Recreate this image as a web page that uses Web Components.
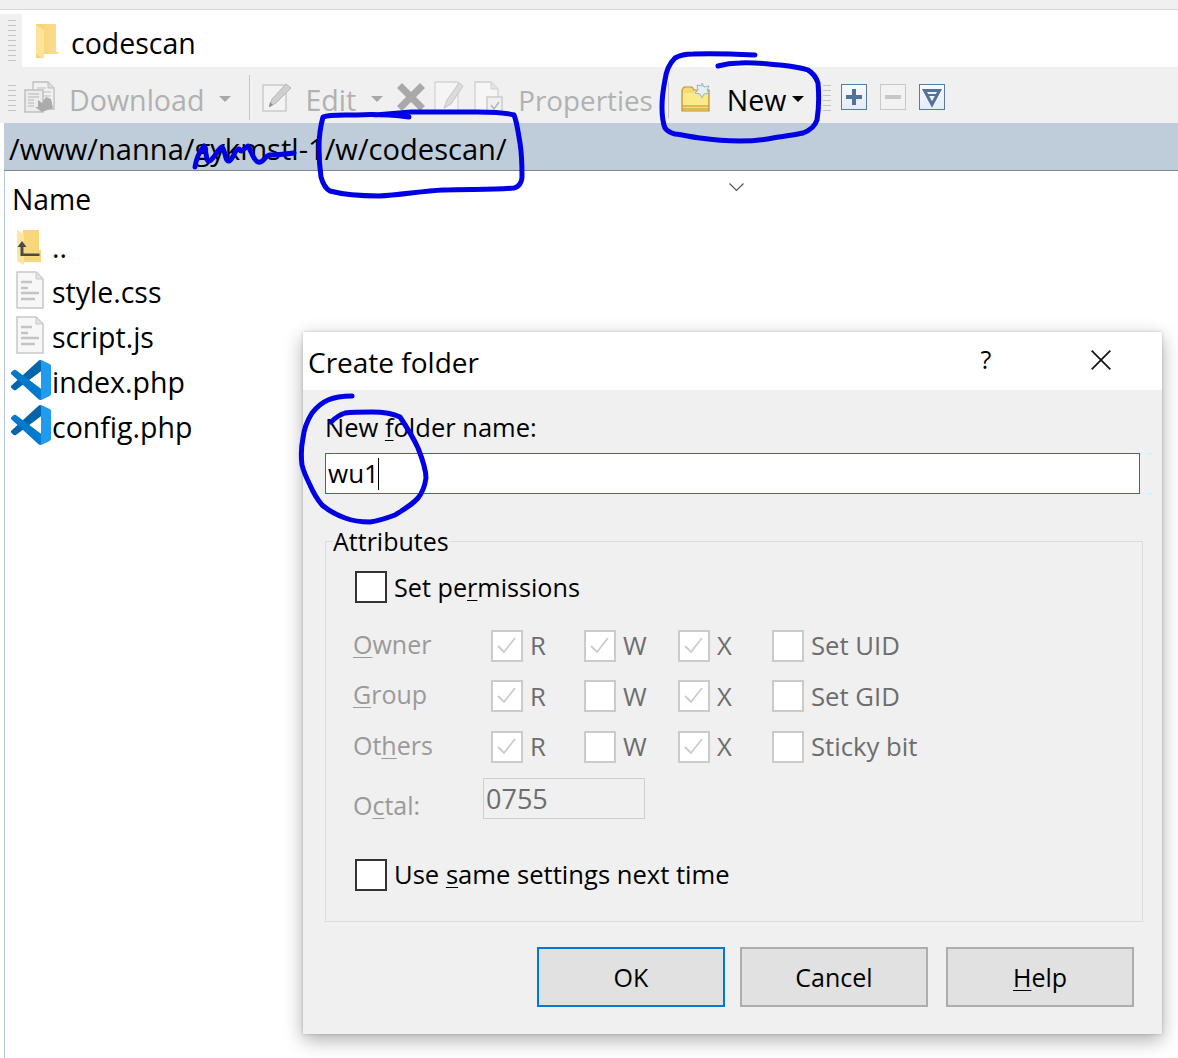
<!DOCTYPE html>
<html lang="en"><head><meta charset="utf-8"><title>Create folder</title>
<style>
html,body{margin:0;padding:0;background:#fff;overflow:hidden}
body{font-family:"Open Sans","Liberation Sans",sans-serif;color:#000}
</style></head><body>
<fz-app></fz-app>
<script>
const define=(name,html)=>{customElements.define(name,class extends HTMLElement{
  constructor(){super();this.attachShadow({mode:'open'});if(typeof html!=='function')this.shadowRoot.innerHTML=html}
  connectedCallback(){if(typeof html==='function')this.shadowRoot.innerHTML=html(this)}
})};

const GRIP=(h)=>`<svg width="9" height="${h}" viewBox="0 0 9 ${h}" style="display:block;flex:none">${Array.from({length:Math.floor(h/5)+1},(_,i)=>`<rect x="0" y="${i*5}" width="8" height="1" fill="#c4c4c4"/>`).join('')}</svg>`;

const VS=`<svg width="40" height="40" viewBox="0 0 100 100" style="margin-top:-3px"><path fill="#0065a9" d="M96.5 10.8 75.9.9a6.2 6.2 0 0 0-7.1 1.2L1.4 63.5a4.2 4.2 0 0 0 0 6.2l5.5 5a4.2 4.2 0 0 0 5.3.2L93.3 14.5c2.7-2.1 6.7-.2 6.7 3.3V17a6.2 6.2 0 0 0-3.5-6.2z"/><path fill="#007acc" d="M96.5 89.2 75.9 99.1a6.2 6.2 0 0 1-7.1-1.2L1.4 36.5a4.2 4.2 0 0 1 0-6.2l5.5-5a4.2 4.2 0 0 1 5.3-.2l81.1 60.4c2.7 2.1 6.7.2 6.7-3.3v.8a6.2 6.2 0 0 1-3.5 6.2z"/><path fill="#1f9cf0" d="M75.9 99.1a6.2 6.2 0 0 1-7.1-1.2c2.3 2.3 6.2.7 6.2-2.6V4.7c0-3.3-3.9-4.9-6.2-2.6a6.2 6.2 0 0 1 7.1-1.2l20.6 9.9a6.2 6.2 0 0 1 3.5 5.6v67.2a6.2 6.2 0 0 1-3.5 5.6z"/></svg>`;
const DOC=`<svg width="28" height="38" viewBox="0 0 28 38" style="margin:-4px 2px 0 0"><path d="M1 1h19l7 7v29H1z" fill="#f7f7f7" stroke="#c8c8c8" stroke-width="1.5"/><path d="M20 1v7h7z" fill="#e2e2e2" stroke="#c8c8c8"/><path d="M5 11h11M5 17h7M5 22h18M5 28h14" stroke="#c4c4c4" stroke-width="2.5"/></svg>`;
const UPF=`<svg width="24" height="36" viewBox="0 0 24 36" style="margin-right:4px"><path d="M6 1h16v20h2v12H7z" fill="#f7d67c"/><path d="M0 1l7 4v31l-7-4z" fill="#fbe79f"/><path d="M5 12l-4.500 6h3v9h19v-2.400H6.500V18h3z" fill="#4c4a48"/></svg>`;

define('fz-grip',h=>`<style>:host{display:block;flex:none}</style>${GRIP(+h.getAttribute('h'))}`);

define('fz-address',`<style>
:host{display:flex;align-items:center;height:53px;margin-top:4px;padding-left:8px;background:#f0f0f0}
.box{flex:1;height:53px;margin-left:5px;background:#fff;display:flex;align-items:center;padding-left:13px;gap:12px;font-size:28.5px}
svg{flex:none}
span{margin-top:4px}
</style><fz-grip h="42"></fz-grip><div class="box">
<svg width="24" height="36" viewBox="0 0 24 36"><defs><linearGradient id="f" x1="0" x2="1" y1="0" y2="0"><stop offset="0" stop-color="#f7d273"/><stop offset="1" stop-color="#f9de92"/></linearGradient></defs><path d="M1 1h20v28h2.500v2H7V35H1z" fill="url(#f)"/><path d="M1 2l8 5v29L1 31z" fill="#fde49a"/></svg>
<span>codescan</span></div>`);

const ICONS={
dl:`<svg width="31" height="32" viewBox="0 0 31 32"><path d="M9 1h15l6 6v21H9z" fill="#f2f2f2" stroke="#bdbdbd" stroke-width="1.300"/><path d="M24 1v6h6" fill="#ddd" stroke="#bdbdbd"/><path d="M13 7h9M13 11h14M13 15h14M13 19h14M13 23h14" stroke="#bcbcbc"/><rect x="1" y="9" width="18" height="22" fill="#ececec" stroke="#b9b9b9" stroke-width="1.300"/><path d="M4 13h11M4 16h11M4 19h6M4 22h6M4 25h6" stroke="#b5b5b5"/><path d="M14 19v7h-3l7 5 11-4-2-9-5-2-4 6-4-3z" fill="#ababab"/></svg>`,
edit:`<svg width="31" height="32" viewBox="0 0 31 32"><rect x="1" y="4" width="23" height="26" fill="#f3f3f3" stroke="#c4c4c4" stroke-width="1.300"/><path d="M7 26l3-8L24 3l5 4-15 15z" fill="#cfcfcf" stroke="#b8b8b8"/><path d="M7 26l1-5 3 3z" fill="#8f8f8f"/></svg>`,
del:`<svg width="30" height="30" viewBox="0 0 30 30"><path d="M3.500 3.500l23 23M26.500 3.500l-23 23" stroke="#a9a9a9" stroke-width="7"/></svg>`,
edit2:`<svg width="31" height="32" viewBox="0 0 31 32"><path d="M2 1h23v30H2z" fill="#f5f5f5" stroke="#d4d4d4" stroke-width="1.300"/><path d="M11 27l3-8L26 2l4 3-12 18z" fill="#dcdcdc" stroke="#c4c4c4"/></svg>`,
prop:`<svg width="30" height="33" viewBox="0 0 30 33"><path d="M1 1h16l7 7v23H1z" fill="#f6f6f6" stroke="#d0d0d0" stroke-width="1.300"/><path d="M17 1v7h7" fill="#e4e4e4" stroke="#d0d0d0"/><rect x="13" y="16" width="15" height="16" fill="#f0f0f0" stroke="#c6c6c6" stroke-width="1.300"/><path d="M17 24l3 4 5-7" fill="none" stroke="#b4b4b4" stroke-width="1.500"/></svg>`,
nw:`<svg width="29" height="30" viewBox="0 0 29 30"><path d="M1 8l2-3h8l2 3h15v21H1z" fill="#f4d97a" stroke="#bf9126" stroke-width="1.200"/><path d="M2 11h25v12H2z" fill="#fbe98a"/><path d="M1 24h27M1 27h27" stroke="#c79a2e"/><path d="M21 1l2 4 5-1-2 4 2 3-5 1-2 4-2-4-5-1 3-3-1-5 5 1z" fill="#e8eef6" stroke="#9db0c8"/></svg>`
};
define('fz-tool',h=>`<style>:host{display:inline-flex;align-items:center;color:${h.hasAttribute('on')?'#000':'#b1b1b1'};font-size:${h.getAttribute('fs')||'28.6'}px;flex:none;margin-top:4px}svg{display:block;flex:none}
.t{margin-left:${h.getAttribute('g')||0}px;margin-top:5px;white-space:nowrap}.a{margin-top:4px;margin-left:${h.getAttribute('ag')||14}px;width:0;height:0;border:6px solid transparent;border-bottom:0;border-top:6px solid ${h.hasAttribute('on')?'#000':'#a8a8a8'}}</style>
${ICONS[h.getAttribute('i')]}${h.textContent.trim()?`<span class="t">${h.textContent.trim()}</span>`:''}${h.hasAttribute('arrow')?'<i class="a"></i>':''}`);

define('fz-square',h=>{const c=h.getAttribute('c'),g={plus:`<path d="M11 5h4v6h6v4h-6v6h-4v-6H5v-4h6z" fill="#54719a"/>`,minus:`<rect x="5" y="11" width="16" height="4" fill="#c6c6c6"/>`,tri:`<path d="M5.500 6.500h15l-7.500 14z" fill="none" stroke="#54719a" stroke-width="3"/><path d="M8 11h10" stroke="#54719a" stroke-width="2"/>`}[h.getAttribute('g')];
return `<style>:host{display:block;flex:none;width:26px;height:26px}svg{display:block}</style><svg width="26" height="26" viewBox="0 0 26 26"><defs><linearGradient id="g" x1="0" y1="0" x2="0" y2="1"><stop offset="0" stop-color="#f8fafd"/><stop offset="1" stop-color="#e4ecf6"/></linearGradient></defs><rect x=".5" y=".5" width="25" height="25" fill="${c==='off'?'#f2f2f2':'url(#g)'}" stroke="${c==='off'?'#c9c9c9':'#5a7aa2'}"/>${g}</svg>`});

define('fz-toolbar',`<style>
:host{display:flex;align-items:center;height:56px;padding-left:8px;background:#f0f0f0}
.sep{flex:none;width:1px;background:#c5c5c5;height:45px;margin-top:4px}
.sep2{height:36px;margin-top:10px}
</style>
<fz-grip h="26" style="margin-top:5px"></fz-grip>
<fz-tool i="dl" g="14" arrow ag="15" style="margin-left:7px"> Download</fz-tool>
<div class="sep" style="margin-left:18px"></div>
<fz-tool i="edit" g="12" arrow ag="15" style="margin-left:12px">Edit</fz-tool>
<fz-tool i="del" style="margin-left:13px"></fz-tool>
<fz-tool i="edit2" style="margin-left:7px"></fz-tool>
<fz-tool i="prop" g="14" fs="27.8" style="margin-left:10px">Properties</fz-tool>
<div class="sep sep2" style="margin-left:15px"></div>
<fz-tool on i="nw" g="17" arrow ag="6" fs="28.5" style="margin-left:12px">New</fz-tool>
<fz-grip h="26" style="margin-left:19px;margin-top:5px"></fz-grip>
<fz-square g="plus" style="margin-left:9px;margin-top:4px"></fz-square>
<fz-square g="minus" c="off" style="margin-left:13px;margin-top:4px"></fz-square>
<fz-square g="tri" style="margin-left:13px;margin-top:4px"></fz-square>`);

define('fz-pathbar',`<style>:host{display:flex;align-items:center;height:43px;padding:4px 0 0 5px;margin-left:4px;background:#bfccd9;border-bottom:1px solid #80868e;font-size:29.1px;white-space:nowrap}</style><slot></slot>`);

define('fz-row',h=>`<style>:host{display:flex;align-items:center;height:45px;font-size:28.5px;white-space:nowrap}
.i{width:41px;height:41px;flex:none;display:flex;justify-content:center;align-items:center}
.t{margin-left:1px}</style><span class="i">${{vs:VS,doc:DOC,up:UPF}[h.getAttribute('i')]}</span><span class="t"><slot></slot></span>`);

define('fz-list',`<style>
:host{display:block;margin-left:4px;height:887px;border-left:1px solid #b9c8e6;padding-left:1px}
.h{box-sizing:border-box;height:53px;padding:3px 0 0 6px;display:flex;align-items:center;font-size:28.3px;position:relative}
.c{position:absolute;left:723px;top:12px}
.rows{padding-left:4px}
</style><div class="h">Name<svg class="c" width="15" height="9" viewBox="0 0 15 9"><path d="M.5.5l7 7 7-7" fill="none" stroke="#555" stroke-width="1.200"/></svg></div>
<div class="rows"><slot></slot></div>`);

define('fz-check',h=>{const on=h.hasAttribute('on'),dis=h.hasAttribute('dis');
return `<style>:host{display:flex;align-items:center;font-size:${dis?'25.7':'25.2'}px;color:${dis?'#6d6d6d':'#000'};white-space:nowrap}
.b{box-sizing:border-box;width:32px;height:32px;background:#fff;border:${dis?'2.5px solid #cbcbcb':'2.5px solid #333'};flex:none;display:block}
.l{margin-left:7px}</style>
<span class="b">${on?`<svg width="27" height="27" viewBox="0 0 27 27" style="display:block"><path d="M5 14l6 6L22 6" fill="none" stroke="#cbcbcb" stroke-width="1.800"/></svg>`:''}</span><span class="l"><slot></slot></span>`});

define('fz-btn',h=>`<style>:host{box-sizing:border-box;width:188px;height:60px;flex:none;display:flex;align-items:center;justify-content:center;background:#e1e1e1;border:${h.hasAttribute('def')?'2px solid #0078d7':'2px solid #adadad'};font-size:25px}</style><slot></slot>`);

define('fz-dialog',`<style>
:host{position:absolute;left:303px;top:332px;width:859px;height:702px;background:#f0f0f0;box-shadow:0 6px 18px rgba(0,0,0,.32),0 0 3px rgba(0,0,0,.18);display:flex;flex-direction:column;font-size:25.5px;color:#000}
.title{flex:none;height:58px;background:#fff;display:flex;align-items:center;padding-left:5px;font-size:28px}
.title span:first-child{flex:1;margin-top:1px}
.q{font-size:25px;width:20px;text-align:center;margin-right:95px;margin-top:-4px}
.x{margin-right:51px;margin-top:-3px;display:block}
.body{flex:1;padding:20px 22px 0 22px;display:flex;flex-direction:column;min-height:0}
u{text-underline-offset:3px;text-decoration-thickness:1px}
.lab{height:34px;display:flex;align-items:center}
.inp{box-sizing:border-box;height:41px;width:815px;margin-top:9px;background:#fff;border:1px solid #0078d7;display:flex;align-items:center;padding-left:2px;font-size:26px}
.inp span{margin-top:-2px}
.caret{width:1px;height:32px;background:#000;margin-left:-1px}
.fs{box-sizing:border-box;position:relative;margin-top:47px;width:818px;height:381px;border:1px solid #dcdcdc;padding:28px 0 0 29px}
.leg{position:absolute;left:7px;top:-17px;background:#f0f0f0;height:32px;display:flex;align-items:center;font-size:25px;line-height:1}
.grid{display:grid;grid-template-columns:138px 93px 94px 94px auto;margin-top:24px;margin-left:-2px;row-gap:15.500px;align-items:center;color:#9a9a9a;font-size:25px}
.grid .n{margin-top:-4px}
.oct{display:flex;align-items:center;margin-top:10px;margin-left:-2px;color:#9a9a9a;font-size:25px}
.oct .n{width:130px;margin-top:14px}
.ob{box-sizing:border-box;width:162px;height:41px;border:1px solid #cfcfcf;background:#f0f0f0;color:#6d6d6d;display:flex;align-items:center;padding-left:2px;font-size:27px}
.same{margin-top:35px;font-size:25.6px}
.btns{display:flex;margin-top:25px;margin-left:212px;gap:15px}
.btns fz-btn:last-child{margin-left:3px}
</style>
<div class="title"><span>Create folder</span><span class="q">?</span><svg class="x" width="20" height="20" viewBox="0 0 20 20"><path d="M.700.700l18.600 18.600M19.300.700L.700 19.300" stroke="#111" stroke-width="1.700"/></svg></div>
<div class="body">
<div class="lab"><span>New <u>f</u>older name:</span></div>
<div class="inp"><span>wu1</span><i class="caret"></i></div>
<div class="fs"><div class="leg">Attributes</div>
<fz-check>Set pe<u>r</u>missions</fz-check>
<div class="grid">
<span class="n"><u>O</u>wner</span><fz-check dis on>R</fz-check><fz-check dis on>W</fz-check><fz-check dis on>X</fz-check><fz-check dis>Set UID</fz-check>
<span class="n"><u>G</u>roup</span><fz-check dis on>R</fz-check><fz-check dis>W</fz-check><fz-check dis on>X</fz-check><fz-check dis>Set GID</fz-check>
<span class="n">Ot<u>h</u>ers</span><fz-check dis on>R</fz-check><fz-check dis>W</fz-check><fz-check dis on>X</fz-check><fz-check dis>Sticky bit</fz-check>
</div>
<div class="oct"><span class="n">O<u>c</u>tal:</span><div class="ob">0755</div></div>
<fz-check class="same">Use <u>s</u>ame settings next time</fz-check>
</div>
<div class="btns"><fz-btn def>OK</fz-btn><fz-btn>Cancel</fz-btn><fz-btn><span><u>H</u>elp</span></fz-btn></div>
</div>`);

define('fz-ink',`<style>:host{position:absolute;left:0;top:0;width:1178px;height:1058px;pointer-events:none;display:block}svg{display:block}path{fill:none;stroke:#0000e4;stroke-width:5;stroke-linecap:round;stroke-linejoin:round}</style>
<svg width="1178" height="1058" viewBox="0 0 1178 1058">
<path d="M409 117C392 115 372 114 357 115C345 115 330 114 323 117C320 128 319 138 319 147C319 158 320 170 321 177C323 184 326 189 330 191C345 195 362 196 379 196C400 195 422 191 443 190C470 189 495 190 514 188C519 187 522 182 522 177C522 165 522 155 520 143C518 132 517 122 514 115C500 111 482 112 464 112C445 112 428 112 411 112C398 113 386 114 375 115"/>
<path d="M195 167C196 160 199 152 204 146C207 154 206 162 209 161C214 160 218 148 222 147C226 152 225 162 229 161C233 160 235 148 239 149C242 154 243 148 248 146C252 152 253 160 258 162C263 164 265 155 270 155C278 155 286 154 294 153"/>
<path d="M755 55C735 54 712 53 693 54C686 54 680 55 675 58C669 64 666 72 665 80C663 90 662 99 662 107C662 116 663 123 665 128C668 132 671 133 675 134C684 135 692 137 700 138C714 140 727 141 740 141C752 141 762 140 773 138C783 136 795 135 803 133C811 130 815 126 817 120C819 108 819 95 818 83C816 77 813 73 808 70C799 67 790 66 780 65C767 64 753 62 740 63C732 63 725 64 718 66"/>
<path d="M352 396C343 396 335 397 328 400C321 403 316 408 312 413C307 421 304 429 303 438C301 448 301 457 302 465C304 473 307 479 310 485C313 492 317 499 322 505C329 511 337 515 345 518C353 521 362 522 370 522C379 521 387 518 395 515C403 510 412 505 418 498C423 492 425 485 426 478C426 468 422 458 418 448C413 437 406 426 400 417C392 413 382 412 372 412C362 412 353 412 345 413C339 415 335 418 331 422"/>
</svg>`);

define('fz-app',`<style>
:host{display:block;position:relative;width:1178px;height:1058px;overflow:hidden;background:#fff}
.top{height:9px;background:#f0f0f0;border-bottom:1px solid #d9d9d9}
</style>
<div class="top"></div>
<fz-address></fz-address>
<fz-toolbar></fz-toolbar>
<fz-pathbar>/www/nanna/gykmstl-1/w/codescan/</fz-pathbar>
<fz-list>
<fz-row i="up">..</fz-row>
<fz-row i="doc">style.css</fz-row>
<fz-row i="doc">script.js</fz-row>
<fz-row i="vs">index.php</fz-row>
<fz-row i="vs">config.php</fz-row>
</fz-list>
<fz-dialog></fz-dialog>
<fz-ink></fz-ink>`);
</script>
</body></html>
